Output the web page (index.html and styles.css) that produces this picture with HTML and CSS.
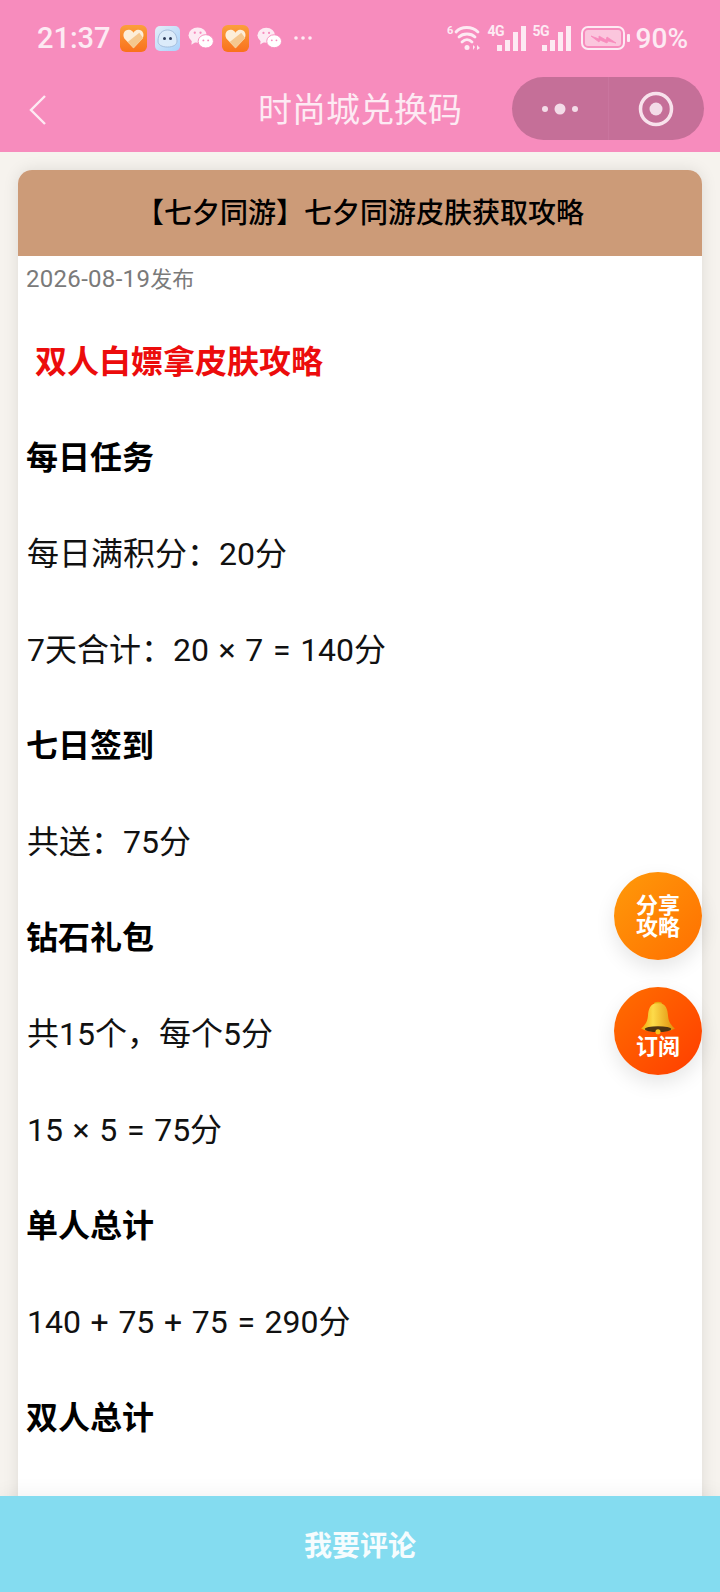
FILE: index.html
```html
<!DOCTYPE html>
<html lang="zh-CN">
<head>
    <meta charset="UTF-8">
    <meta name="viewport" content="width=device-width, initial-scale=1.0">
    <title>时尚城兑换码</title>
    <link rel="stylesheet" href="styles.css">
</head>
<body>

<div class="page">
    <header class="top">
        <div class="status-bar">
            <div class="status-left">
                <span class="time">21:37</span>
                <svg class="heart-icon" width="27" height="27" viewBox="0 0 28 28"><defs><linearGradient id="og" x1="0" y1="0" x2="0" y2="1"><stop offset="0" stop-color="#fb9f3c"/><stop offset="1" stop-color="#f9711c"/></linearGradient></defs><rect width="28" height="28" rx="6" fill="url(#og)"/><path d="M14 24 L4.5 14 C2 9 5 4.500 9.500 5 C11.500 5.200 13 6.300 14 8 C15 6.300 16.500 5.200 18.500 5 C23 4.500 26 9 23.500 14 Z" fill="#fdeed8"/><path d="M14 24 L8 17.500 L20 8 L24 13.500 Z" fill="#f5c78e"/></svg>
                <svg class="cloud-icon" width="25" height="25" viewBox="0 0 25 25"><defs><linearGradient id="bl" x1="0" y1="0" x2="1" y2="1"><stop offset="0" stop-color="#e4eef8"/><stop offset="1" stop-color="#a9d2fb"/></linearGradient></defs><rect width="25" height="25" rx="5" fill="url(#bl)"/><path d="M3 15 C3 7 8 4 12.500 4 C17 4 22 7 22 15 C22 19 18 21 12.500 21 C7 21 3 19 3 15 Z" fill="#dcebfa" stroke="#9ab4d4" stroke-width="0.800"/><circle cx="9.500" cy="12.500" r="1.500" fill="#2e3c5a"/><circle cx="15.500" cy="12.500" r="1.500" fill="#2e3c5a"/></svg>
                <svg class="chat-icon" width="26" height="22" viewBox="0 0 27 23"><use href="#wechat"/></svg>
                <svg class="heart-icon" width="27" height="27" viewBox="0 0 28 28"><rect width="28" height="28" rx="6" fill="url(#og)"/><path d="M14 24 L4.5 14 C2 9 5 4.500 9.500 5 C11.500 5.200 13 6.300 14 8 C15 6.300 16.500 5.200 18.500 5 C23 4.500 26 9 23.500 14 Z" fill="#fdeed8"/><path d="M14 24 L8 17.500 L20 8 L24 13.500 Z" fill="#f5c78e"/></svg>
                <svg class="chat-icon" width="25" height="22" viewBox="0 0 27 23">
                    <g id="wechat">
                        <ellipse cx="10" cy="8.500" rx="9.500" ry="8" fill="#fdeaf3"/>
                        <path d="M4 13 L3.500 18.500 L9 15 Z" fill="#fdeaf3"/>
                        <ellipse cx="18.500" cy="15" rx="8" ry="7" fill="#fff" stroke="#f78cbd"/>
                        <circle cx="7" cy="6" r="1.200" fill="#f78cbd"/>
                        <circle cx="13" cy="6" r="1.200" fill="#f78cbd"/>
                        <circle cx="16" cy="14" r="1" fill="#f78cbd"/>
                        <circle cx="21" cy="14" r="1" fill="#f78cbd"/>
                    </g>
                </svg>
                <svg class="more-dots" width="20" height="6" viewBox="0 0 20 6"><circle cx="3" cy="3" r="1.800"/><circle cx="10" cy="3" r="1.800"/><circle cx="17" cy="3" r="1.800"/></svg>
            </div>
            <div class="status-right">
                <svg width="36" height="28" viewBox="0 0 36 28" fill="none" stroke="#fdeaf3" stroke-width="2.800" stroke-linecap="round">
                    <path d="M9 8 C14 2 25 2 31 8"/>
                    <path d="M12 13 C16 9 24 9 28 13"/>
                    <path d="M15 18 C18 15 22 15 25 18"/>
                    <circle cx="20" cy="23.500" r="2.500" fill="#fdeaf3" stroke="none"/>
                    <path d="M26 26 V21 L28 23 Z M30 21 V26 L33 24 Z" fill="#fdeaf3" stroke="none"/>
                    <text x="0" y="10" class="wifi-label" stroke="none" fill="#fdeaf3">6</text>
                </svg>
                <div class="signal">
                    <span class="net-label">4G</span>
                    <svg width="29" height="26" viewBox="0 0 29 26" fill="#fdeaf3"><rect x="0" y="19" width="5" height="6"/><rect x="8" y="14" width="5" height="11"/><rect x="16" y="6" width="5" height="19"/><rect x="24" y="0" width="5" height="25"/></svg>
                </div>
                <div class="signal signal-5g">
                    <span class="net-label">5G</span>
                    <svg width="29" height="26" viewBox="0 0 29 26" fill="#fdeaf3"><rect x="0" y="19" width="5" height="6"/><rect x="8" y="14" width="5" height="11"/><rect x="16" y="6" width="5" height="19"/><rect x="24" y="0" width="5" height="25"/></svg>
                </div>
                <svg class="battery-icon" width="50" height="26" viewBox="0 0 50 26"><rect x="1" y="2" width="42" height="22" rx="6" fill="none" stroke="#fdeaf3" stroke-width="2"/><rect x="4" y="5" width="36" height="16" rx="3" fill="#fbc6dd"/><path d="M10 11 L18 14 L18 11 L25 15 L26 12 L35 18 L27 16 L26 18 L19 15 L18 17 Z" fill="#f78cbd" stroke="#f78cbd" stroke-width="0.800"/><rect x="46" y="9" width="3" height="8" rx="1" fill="#fdeaf3"/></svg>
                <span class="battery">90%</span>
            </div>
        </div>
        <nav class="nav-bar">
            <svg class="back" width="20" height="32" viewBox="0 0 20 32" fill="none" stroke="#fdeaf3" stroke-width="2.400"><path d="M17 2 L3 16 L17 30"/></svg>
            <h1 class="nav-title">时尚城兑换码</h1>
            <div class="capsule">
                <div class="capsule-part">
                    <svg width="38" height="14" viewBox="0 0 38 14" fill="#f3dce8"><circle cx="4" cy="7" r="3"/><circle cx="19" cy="7" r="5.500"/><circle cx="34" cy="7" r="3"/></svg>
                </div>
                <div class="capsule-part">
                    <svg width="36" height="36" viewBox="0 0 36 36"><circle cx="18" cy="18" r="15.500" fill="none" stroke="#f8e2ec" stroke-width="3.500"/><circle cx="18" cy="18" r="6.500" fill="#f3dce8"/></svg>
                </div>
            </div>
        </nav>
    </header>

    <main class="card">
        <div class="card-head">【七夕同游】七夕同游皮肤获取攻略</div>
        <div class="card-body">
            <div class="date"><span class="date-num">2026-08-19</span>发布</div>
            <p class="intro">双人白嫖拿皮肤攻略</p>
            <p class="sub">每日任务</p>
            <p>每日满积分：20分</p>
            <p>7天合计：20 × 7 = 140分</p>
            <p class="sub">七日签到</p>
            <p>共送：75分</p>
            <p class="sub">钻石礼包</p>
            <p>共15个，每个5分</p>
            <p>15 × 5 = 75分</p>
            <p class="sub">单人总计</p>
            <p>140 + 75 + 75 = 290分</p>
            <p class="sub">双人总计</p>
        </div>
    </main>

    <div class="float-btn share">分享<br>攻略</div>
    <div class="float-btn subscribe">
        <svg class="bell" width="36" height="36" viewBox="0 0 34 34">
            <defs><linearGradient id="gold" x1="0" y1="0" x2="1" y2="0"><stop offset="0" stop-color="#f0a90c"/><stop offset="0.35" stop-color="#fddb4a"/><stop offset="1" stop-color="#e08e0a"/></linearGradient></defs>
            <path d="M13 4 C13 1 21 1 21 4 Z" fill="#e9a90f"/>
            <path d="M17 3 C9 3 8 9 7.500 15 C7 21 4.500 24 1 27 C8 31 26 31 33 27 C29.500 24 27 21 26.500 15 C26 9 25 3 17 3 Z" fill="url(#gold)"/>
            <ellipse cx="17" cy="27.500" rx="12.500" ry="2.800" fill="#4f3412"/>
            <circle cx="17" cy="30" r="2.400" fill="#f6c21c"/>
        </svg>
        <span class="sub-text">订阅</span>
    </div>

    <footer class="bottom-bar">我要评论</footer>
</div>

</body>
</html>
```

FILE: styles.css
```css
* {
    box-sizing: border-box;
}
html, body {
    margin: 0;
    padding: 0;
}
body {
    font-family: Roboto, "Noto Sans CJK SC", sans-serif;
    background-color: #f6f3ee;
    color: #000;
}
.page {
    position: relative;
    height: 1592px;
    overflow: hidden;
    display: flex;
    flex-direction: column;
}
.top {
    height: 152px;
    flex-shrink: 0;
    background-color: #f78cbd;
}
.status-bar {
    height: 76px;
    padding: 0 32px 0 37px;
    display: flex;
    align-items: center;
    justify-content: space-between;
}
.status-left {
    display: flex;
    align-items: center;
}
.time {
    width: 83px;
    font-size: 29px;
    font-weight: 500;
    color: #fdeaf3;
}
.heart-icon {
    display: block;
}
.cloud-icon {
    display: block;
    margin: 0 8px;
}
.chat-icon {
    display: block;
    margin-right: 8px;
}
.more-dots {
    fill: #fdeaf3;
}
.heart-icon + .chat-icon {
    margin-left: 8px;
    margin-right: 11px;
}
.status-right {
    display: flex;
    align-items: center;
    gap: 5px;
}
.wifi-label {
    font: 700 11px Roboto, sans-serif;
}
.signal {
    position: relative;
    width: 38px;
    height: 28px;
    display: flex;
    justify-content: flex-end;
    align-items: flex-end;
}
.signal-5g {
    margin-left: 2px;
}
.net-label {
    position: absolute;
    left: 0;
    top: -1px;
    font-size: 14px;
    line-height: 16px;
    font-weight: 700;
    letter-spacing: -0.5px;
    color: #fdeaf3;
}
.battery-icon {
    margin-left: 5px;
}
.battery {
    font-size: 28px;
    font-weight: 500;
    color: #fdeaf3;
}
.nav-bar {
    position: relative;
    height: 76px;
    display: flex;
    align-items: center;
    justify-content: center;
}
.back {
    position: absolute;
    left: 28px;
    top: 18px;
}
.nav-title {
    margin: 0 0 14px;
    font-size: 34px;
    font-weight: 400;
    color: #fdeaf3;
}
.capsule {
    position: absolute;
    right: 16px;
    top: 1px;
    width: 192px;
    height: 63px;
    border-radius: 32px;
    background-color: #c56f98;
    display: flex;
}
.capsule-part {
    flex: 1;
    display: flex;
    align-items: center;
    justify-content: center;
}
.capsule-part + .capsule-part {
    border-left: 1px solid #c9759e;
}
.card {
    flex: 1;
    margin: 18px 18px 0;
    border-radius: 14px 14px 0 0;
    background-color: #fff;
    box-shadow: 0 0 16px rgba(0, 0, 0, 0.1);
}
.card-head {
    height: 86px;
    padding-bottom: 4px;
    border-radius: 14px 14px 0 0;
    background-color: #cc9b78;
    display: flex;
    align-items: center;
    justify-content: center;
    font-size: 28px;
    font-weight: 500;
}
.card-body {
    padding: 7px 8px 0;
}
.date {
    height: 32px;
    font-size: 22px;
    line-height: 32px;
    color: #7a7a7a;
}
.date-num {
    font-size: 24px;
    letter-spacing: 0.3px;
}
.card-body p {
    margin: 0 0 48px;
    padding-left: 1px;
    font-size: 32px;
    line-height: 48px;
    word-spacing: 1.7px;
    color: #111;
}
.card-body .sub {
    padding-left: 0;
    font-weight: 700;
    color: #000;
}
.card-body .intro {
    margin-top: 43px;
    padding-left: 9px;
    font-weight: 700;
    color: #ec0c0c;
}
.float-btn {
    position: absolute;
    right: 18px;
    width: 88px;
    height: 88px;
    border-radius: 50%;
    box-shadow: 0 8px 20px rgba(0, 0, 0, 0.1);
    color: #fff;
    font-size: 22px;
    font-weight: 700;
    line-height: 22px;
    text-align: center;
}
.share {
    top: 872px;
    padding-top: 23px;
    background: linear-gradient(135deg, #ff9a0a, #ff6f00);
}
.subscribe {
    top: 987px;
    padding-top: 13px;
    background: linear-gradient(135deg, #ff6f00, #ff3d00);
}
.bell {
    display: block;
    margin: 0 auto;
}
.sub-text {
    display: block;
}
.bottom-bar {
    position: absolute;
    left: 0;
    right: 0;
    bottom: 0;
    height: 96px;
    background-color: #84dcf0;
    box-shadow: 0 0 20px rgba(0, 0, 0, 0.07);
    color: #f6fcfe;
    display: flex;
    align-items: center;
    justify-content: center;
    font-size: 28px;
    font-weight: 700;
}
```
